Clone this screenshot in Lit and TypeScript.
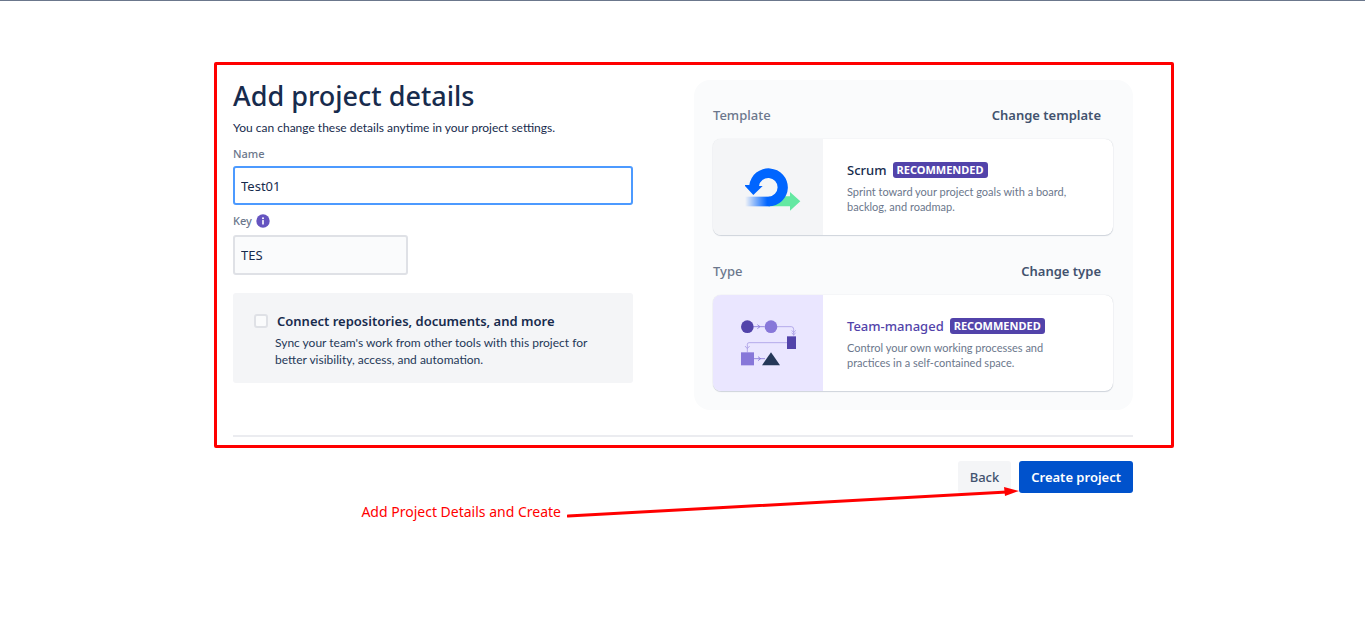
import { LitElement, html, css, svg } from "lit";
import { customElement, property } from "lit/decorators.js";

const scrumIcon = svg`
  <svg width="56" height="43" viewBox="45 26 168 129" aria-hidden="true">
    <defs>
      <linearGradient id="tail" x1="0" x2="1">
        <stop offset="0" stop-color="#0065ff" stop-opacity="0"></stop>
        <stop offset="0.9" stop-color="#0065ff"></stop>
      </linearGradient>
    </defs>
    <path d="M116 141 L150 111 H180 V98 L211 126 L180 154 V141 Z" fill="#64e8a2"></path>
    <rect x="45" y="112" width="74" height="29" fill="url(#tail)"></rect>
    <path d="M58 77 A58 57 0 1 1 116 141 V112 A28 28 0 1 0 87 80 H98 L70 107 L45 80 V77 Z" fill="#0065ff"></path>
  </svg>`;

const flowIcon = svg`
  <svg width="56" height="46" viewBox="33 29 168 138" aria-hidden="true">
    <g fill="none" stroke="#8777d9" stroke-width="2.5">
      <path d="M70 49 H104 M82 43 L90 49 L82 55"></path>
      <path d="M140 49 H184 Q191 49 191 57 V76 M185 60 L191 67 L197 60 M185 67 L191 74 L197 67" stroke="#a99ee6"></path>
      <path d="M172 97 H57 Q52 97 52 102 V126 M45 107 L52 115 L59 107" stroke="#a99ee6"></path>
      <path d="M70 145 H105 M84 139 L92 145 L84 151"></path>
    </g>
    <circle cx="52" cy="49" r="19" fill="#5243aa"></circle>
    <circle cx="123" cy="49" r="19" fill="#8777d9"></circle>
    <rect x="171" y="78" width="27" height="38" fill="#5243aa"></rect>
    <rect x="33" y="126" width="39" height="39" fill="#8777d9"></rect>
    <path d="M123 126 L150 165 H96 Z" fill="#253858"></path>
  </svg>`;

@customElement("choice-card")
class ChoiceCard extends LitElement {
  @property() label = "";
  @property() action = "";
  @property() heading = "";
  @property() text = "";
  @property() kind = "scrum";

  static styles = css`
    :host { display: block; }
    .head { display: flex; justify-content: space-between; align-items: center; height: 32px; margin-bottom: 8px; }
    .label { margin: 0; font-size: 13px; line-height: 20px; font-weight: 500; color: #6b778c; }
    .change { border: 0; background: none; padding: 4px 12px; font: inherit; font-size: 13px; font-weight: 600; line-height: 24px; color: #42526e; cursor: pointer; }
    .card { display: flex; min-height: 96px; border-radius: 8px; overflow: hidden; background: #fff; box-shadow: 0 1px 1px rgba(9, 30, 66, 0.16), 0 0 1px rgba(9, 30, 66, 0.2); }
    .thumb { display: flex; align-items: center; justify-content: center; flex: 0 0 110px; box-sizing: border-box; background: #f4f5f7; }
    .scrum { padding: 4px 0 0 10px; }
    .team { padding-left: 2px; background: #eae6ff; }
    .body { flex: 1; padding: 21px 24px 18px; }
    .title { display: flex; align-items: center; gap: 6px; height: 20px; margin-bottom: 4px; }
    .name { margin: 0; font-size: 13px; font-weight: 500; line-height: 20px; color: #172b4d; }
    .purple { color: #5243aa; }
    .badge { padding: 0 4px; border-radius: 3px; background: #5243aa; color: #fff; font-size: 11px; line-height: 16px; font-weight: 700; }
    .text { margin: 0; max-width: 236px; font-family: Lato, "Open Sans", sans-serif; font-size: 11px; line-height: 15px; color: #6b778c; }
  `;

  render() {
    const team = this.kind === "team";
    return html`
      <div class="head">
        <h2 class="label">${this.label}</h2>
        <button class="change" type="button">${this.action}</button>
      </div>
      <div class="card">
        <div class="thumb ${this.kind}">${team ? flowIcon : scrumIcon}</div>
        <div class="body">
          <div class="title">
            <h3 class="name ${team ? "purple" : ""}">${this.heading}</h3>
            <span class="badge">RECOMMENDED</span>
          </div>
          <p class="text">${this.text}</p>
        </div>
      </div>`;
  }
}

@customElement("app-root")
class AppRoot extends LitElement {
  static styles = css`
    :host { display: block; min-height: 100vh; box-sizing: border-box; border-top: 1px solid #6b778c; background: #fff; color: #172b4d; font-family: "Noto Sans", "Open Sans", sans-serif; }
    .page { max-width: 900px; margin: 0 auto; padding: 79px 0 0 1px; }
    .details { position: relative; display: grid; grid-template-columns: 400fr 439fr; gap: 61px; padding-bottom: 25px; border-bottom: 2px solid #ebecf0; }
    .frame { position: absolute; inset: -18px -41px -13px -19px; border: 3px solid #ff0000; border-radius: 2px; pointer-events: none; }
    .title { margin: 0; font-size: 27px; line-height: 32px; font-weight: 500; }
    .intro { margin: 8px 0 10px; font-family: Lato, "Open Sans", sans-serif; font-size: 12px; line-height: 16px; }
    .label { display: flex; align-items: center; gap: 4px; font-size: 11px; line-height: 16px; font-weight: 500; color: #6b778c; margin-bottom: 4px; }
    .field { display: block; box-sizing: border-box; width: 100%; height: 39px; padding: 0 6px; border: 2px solid #dfe1e6; border-radius: 3px; background: #fafbfc; color: #172b4d; font: inherit; font-size: 13px; outline: none; }
    .name { border-color: #4c9aff; background: #fff; margin-bottom: 8px; }
    .key { max-width: 175px; margin: 6px 0 18px; height: 40px; }
    .connect { display: grid; grid-template-columns: 14px 1fr; column-gap: 9px; padding: 18px 21px 15px; border-radius: 3px; background: #f4f5f7; }
    .check { appearance: none; width: 14px; height: 14px; margin: 3px 0 0; border: 2px solid #dfe1e6; border-radius: 3px; background: #fafbfc; }
    .option { font-size: 13px; line-height: 20px; font-weight: 600; margin-bottom: 3px; }
    .hint { grid-column: 1 / -1; margin: 0 0 0 21px; font-family: Lato, "Open Sans", sans-serif; font-size: 12px; line-height: 17px; color: #253858; }
    .panel { display: flex; flex-direction: column; gap: 20px; padding: 19px 20px 19px 19px; border-radius: 16px; background: #fafbfc; }
    .actions { position: relative; display: flex; justify-content: flex-end; gap: 8px; padding-top: 24px; }
    .button { height: 32px; padding: 0 12px; border: 0; border-radius: 3px; font: inherit; font-size: 13px; font-weight: 600; line-height: 32px; background: #f4f5f7; color: #42526e; cursor: pointer; }
    .back { font-weight: 500; }
    .primary { background: #0052cc; color: #fff; }
    .note { position: absolute; right: 114px; top: 48px; display: flex; gap: 6px; pointer-events: none; }
    .caption { margin: 17px 0 0; font-size: 14px; line-height: 20px; color: #ff0000; white-space: nowrap; }
  `;

  render() {
    return html`
      <main class="page">
        <section class="details">
          <form>
            <h1 class="title">Add project details</h1>
            <p class="intro">You can change these details anytime in your project settings.</p>
            <label class="label" for="name">Name</label>
            <input class="field name" id="name" type="text" .value=${"Test01"} />
            <label class="label" for="key">
              Key
              <svg width="14" height="14" viewBox="0 0 14 14" aria-hidden="true">
                <circle cx="7" cy="7" r="6.7" fill="#6554c0"></circle>
                <circle cx="7" cy="4.2" r="1" fill="#fff"></circle>
                <rect x="6.2" y="6" width="1.6" height="4.6" rx="0.5" fill="#fff"></rect>
              </svg>
            </label>
            <input class="field key" id="key" type="text" .value=${"TES"} />
            <div class="connect">
              <input class="check" id="connect" type="checkbox" />
              <label class="option" for="connect">Connect repositories, documents, and more</label>
              <p class="hint">Sync your team's work from other tools with this project for better visibility, access, and automation.</p>
            </div>
          </form>
          <div class="panel">
            <choice-card label="Template" action="Change template" heading="Scrum" kind="scrum"
              text="Sprint toward your project goals with a board, backlog, and roadmap."></choice-card>
            <choice-card label="Type" action="Change type" heading="Team-managed" kind="team"
              text="Control your own working processes and practices in a self-contained space."></choice-card>
          </div>
          <div class="frame"></div>
        </section>
        <footer class="actions">
          <button class="button back" type="button">Back</button>
          <button class="button primary" type="button">Create project</button>
          <div class="note">
            <p class="caption">Add Project Details and Create</p>
            <svg width="452" height="34" viewBox="0 0 452 34" aria-hidden="true">
              <path d="M1 31 L440 7" stroke="#ff0000" stroke-width="3" stroke-linecap="round"></path>
              <path d="M437 2 L452 6 L438 11 Z" fill="#ff0000"></path>
            </svg>
          </div>
        </footer>
      </main>`;
  }
}
